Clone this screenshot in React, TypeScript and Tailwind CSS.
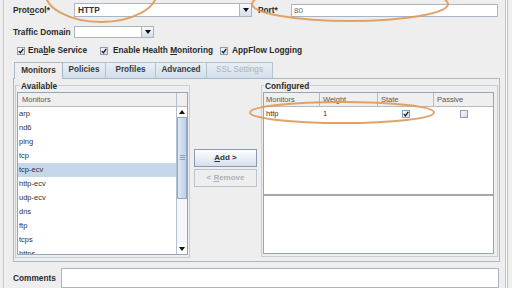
import type { ReactNode } from "react";

const available = ["arp", "nd6", "ping", "tcp", "tcp-ecv", "http-ecv", "udp-ecv", "dns", "ftp", "tcps", "https"];

function Arrow({ up }: { up?: boolean }) {
  return (
    <svg width="6" height="4" viewBox="0 0 6 4">
      <path d={up ? "M0 4 L3 0 L6 4Z" : "M0 0 L6 0 L3 4Z"} fill="#111" />
    </svg>
  );
}

function Check({ on = true }: { on?: boolean }) {
  return (
    <span className="flex h-[8px] w-[8px] shrink-0 items-center justify-center border border-[#8d9db1] bg-gradient-to-br from-[#f8fafd] to-[#d2dce8]">
      {on && (
        <svg width="6" height="6" viewBox="0 0 6 6">
          <path d="M0.8 3.1 L2.4 4.8 L5.3 0.9" fill="none" stroke="#111" strokeWidth="1.3" />
        </svg>
      )}
    </span>
  );
}

function Combo({ w, children }: { w: string; children?: ReactNode }) {
  return (
    <div className={`flex h-full ${w} border border-[#a9b5c3] bg-white`}>
      <span className="flex-1 pl-[3px] text-[8.3px] font-bold leading-[12px] text-[#333]">{children}</span>
      <span className="flex w-[12px] items-center justify-center border-l border-[#a9b5c3] bg-gradient-to-b from-[#f8fbfd] to-[#d5e0ec]">
        <Arrow />
      </span>
    </div>
  );
}

function Tab({ w, active, disabled, children }: { w: string; active?: boolean; disabled?: boolean; children: ReactNode }) {
  return (
    <div
      className={`flex ${w} items-center justify-center text-[8.2px] font-bold ${
        active
          ? "relative z-10 -mb-px border-x border-t border-[#a9b7c6] bg-[#eeeeee] text-[#333]"
          : "border-r border-t border-[#b4c2d0] bg-gradient-to-b from-[#e8eef5] to-[#d3dfeb] text-[#3a3a3a]"
      } ${disabled ? "font-normal text-[#a9b3bd]" : ""}`}
    >
      {children}
    </div>
  );
}

export default function App() {
  return (
    <div className="relative h-[288px] w-[512px] overflow-hidden bg-[#eeeeee] font-['Liberation_Sans',Arial,sans-serif] text-[#2a2a2a]">
      <div className="flex h-full">
        <div className="ml-[3px] w-[2px] border-l border-[#c6c6c6] bg-[#f5f5f5]" />

        <div className="flex w-[495px] flex-col pl-[8px]">
          {/* Protocol / Port */}
          <div className="mt-[3px] flex h-[14px] items-center">
            <span className="w-[61px] text-[8.3px] font-bold">
              Prot<u>o</u>col*
            </span>
            <Combo w="w-[178px]">HTTP</Combo>
            <span className="ml-[6px] w-[33px] text-[8.3px] font-bold">Port*</span>
            <div className="h-[13px] w-[207px] border border-[#a9b5c3] bg-white pl-[2px] text-[8px] leading-[11px] text-[#666]">80</div>
          </div>

          {/* Traffic Domain */}
          <div className="mt-[9px] flex h-[12px] items-center">
            <span className="w-[61px] text-[8.3px] font-bold">Traffic Domain</span>
            <Combo w="w-[80px]" />
          </div>

          {/* Checkboxes */}
          <div className="mt-[7px] flex h-[11px] items-center pl-[4px] text-[8.3px] font-bold">
            <div className="flex w-[83px] items-center gap-[3px]">
              <Check />
              <span>
                Ena<u>b</u>le Service
              </span>
            </div>
            <div className="flex w-[120px] items-center gap-[5px]">
              <Check />
              <span>
                Enable Health <u>M</u>onitoring
              </span>
            </div>
            <div className="flex items-center gap-[4px]">
              <Check />
              <span>AppFlow Logging</span>
            </div>
          </div>

          {/* Tabs */}
          <div className="mt-[6px] flex h-[16px] pl-[1px]">
            <Tab w="w-[49px]" active>
              Monitors
            </Tab>
            <Tab w="w-[43px]">Policies</Tab>
            <Tab w="w-[50px]">Profiles</Tab>
            <Tab w="w-[51px]">Advanced</Tab>
            <Tab w="w-[66px]" disabled>
              SSL Settings
            </Tab>
          </div>

          {/* Tab panel */}
          <div className="flex h-[190px] items-start border border-[#a9b7c6] pl-[1px] pt-[2px]">
            <fieldset className="w-[175px] border border-[#c4ced9] pb-[2px] pl-[1px] pt-[1px]">
              <legend className="ml-[3px] px-[1px] text-[8.3px] font-bold leading-[10px]">Available</legend>
              <div className="flex h-[163px] w-[171px] border border-[#95a5b8] bg-white">
                <div className="flex flex-1 flex-col overflow-hidden">
                  <div className="h-[14px] shrink-0 border-b border-[#b9b9b9] bg-[#efefef] pl-[4px] text-[7.5px] leading-[13px] text-[#555]">
                    Monitors
                  </div>
                  {available.map((m) => (
                    <div
                      key={m}
                      className={`h-[14px] shrink-0 pl-[1px] text-[7.5px] leading-[14px] text-[#333] ${
                        m === "tcp-ecv" ? "bg-[#c6d7ea]" : ""
                      }`}
                    >
                      {m}
                    </div>
                  ))}
                </div>
                <div className="flex w-[11px] flex-col border-l border-[#b4c0cd]">
                  <div className="h-[14px] border-b border-[#b9b9b9] bg-[#efefef]" />
                  <div className="flex h-[10px] items-center justify-center">
                    <Arrow up />
                  </div>
                  <div className="flex h-[82px] items-center justify-center border border-[#93a8c2] bg-gradient-to-r from-[#dce8f6] to-[#bdd0e8]">
                    <div className="flex w-[5px] flex-col gap-[1px]">
                      <div className="h-px bg-[#8ea2ba]" />
                      <div className="h-px bg-[#8ea2ba]" />
                      <div className="h-px bg-[#8ea2ba]" />
                    </div>
                  </div>
                  <div className="flex-1 bg-[#f4f6f9]" />
                  <div className="flex h-[10px] items-center justify-center">
                    <Arrow />
                  </div>
                </div>
              </div>
            </fieldset>

            <div className="ml-[4px] mt-[68px] flex w-[63px] flex-col gap-[2px] text-[8px] font-bold">
              <div className="flex h-[18px] items-center justify-center border border-[#8a9bb0] bg-gradient-to-b from-[#fdfefe] to-[#d6e1ed] text-[#333]">
                <span>
                  <u>A</u>dd &gt;
                </span>
              </div>
              <div className="flex h-[18px] items-center justify-center border border-[#bcc5ce] bg-[#eeeeee] text-[#aab2ba]">
                <span>
                  &lt; <u>R</u>emove
                </span>
              </div>
            </div>

            <fieldset className="ml-[4px] w-[237px] border border-[#c4ced9] pb-[2px] pl-[1px] pt-[1px]">
              <legend className="ml-[1px] px-[1px] text-[8.3px] font-bold leading-[10px]">Configured</legend>
              <div className="flex h-[162px] w-[231px] flex-col border border-[#95a5b8] bg-white">
                <div className="h-[103px] border-b-2 border-[#a8a8a8]">
                  <div className="flex h-[14px] border-b border-[#b9b9b9] bg-[#efefef] text-[7.5px] leading-[13px] text-[#555]">
                    <div className="w-[56px] border-r border-[#b9b9b9] pl-[2px]">Monitors</div>
                    <div className="w-[58px] border-r border-[#b9b9b9] pl-[3px]">Weight</div>
                    <div className="w-[56px] border-r border-[#b9b9b9] pl-[3px]">State</div>
                    <div className="flex-1 pl-[3px]">Passive</div>
                  </div>
                  <div className="flex h-[14px] items-center text-[7.5px] text-[#333]">
                    <div className="w-[56px] pl-[2px]">http</div>
                    <div className="w-[58px] pl-[3px]">1</div>
                    <div className="flex w-[56px] justify-center">
                      <Check />
                    </div>
                    <div className="flex flex-1 justify-center">
                      <Check on={false} />
                    </div>
                  </div>
                </div>
                <div className="flex-1" />
              </div>
            </fieldset>
          </div>

          {/* Comments */}
          <div className="mt-[6px] flex items-start">
            <span className="mt-[4px] w-[48px] text-[8.3px] font-bold">Comments</span>
            <div className="h-[20px] w-[438px] border border-[#a9b5c3] bg-white" />
          </div>
        </div>

        <div className="ml-[5px] w-[3px] border-x border-[#c4c4c4] bg-[#f4f4f4]" />
      </div>

      {/* annotation ellipses */}
      <svg className="pointer-events-none absolute inset-0" width="512" height="288" viewBox="0 0 512 288">
        <g fill="none" stroke="#df9a58" strokeWidth="2" opacity="0.9">
          <ellipse cx="101" cy="-8" rx="56" ry="30" />
          <ellipse cx="350" cy="4" rx="98" ry="17" />
          <ellipse cx="342" cy="112.5" rx="92" ry="10.5" />
        </g>
      </svg>
    </div>
  );
}
